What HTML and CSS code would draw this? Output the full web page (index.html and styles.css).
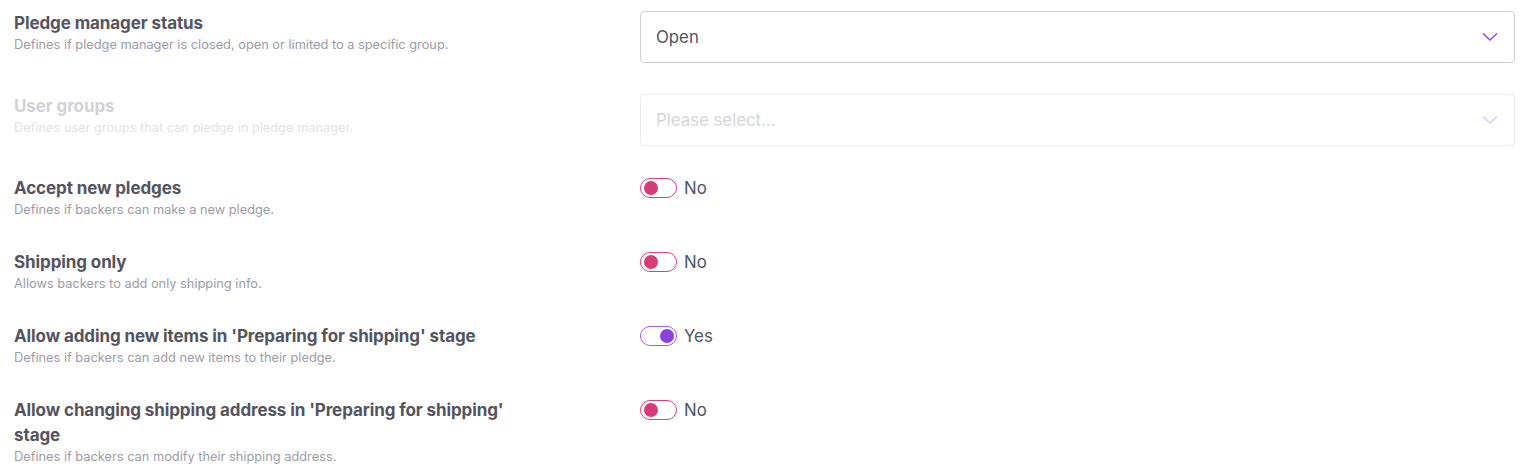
FILE: index.html
```html
<!DOCTYPE html>
<html lang="en">
<head>
<meta charset="utf-8">
<title>Pledge manager settings</title>
<link rel="stylesheet" href="styles.css">
</head>
<body>
<div class="settings">
  <div class="row">
    <div class="label">
      <div class="title">Pledge manager status</div>
      <div class="desc">Defines if pledge manager is closed, open or limited to a specific group.</div>
    </div>
    <div class="control">
      <div class="select">
        <span class="value">Open</span>
        <svg class="chev" width="16" height="10" viewBox="0 0 16 10"><path d="M1 1.5 L8 8 L15 1.5" fill="none" stroke="currentColor" stroke-width="1.5"/></svg>
      </div>
    </div>
  </div>
  <div class="row disabled">
    <div class="label">
      <div class="title">User groups</div>
      <div class="desc">Defines user groups that can pledge in pledge manager.</div>
    </div>
    <div class="control">
      <div class="select">
        <span class="value placeholder">Please select...</span>
        <svg class="chev" width="16" height="10" viewBox="0 0 16 10"><path d="M1 1.5 L8 8 L15 1.5" fill="none" stroke="currentColor" stroke-width="1.5"/></svg>
      </div>
    </div>
  </div>
  <div class="row">
    <div class="label">
      <div class="title">Accept new pledges</div>
      <div class="desc">Defines if backers can make a new pledge.</div>
    </div>
    <div class="control">
      <div class="switch"><span class="toggle off"><span class="knob"></span></span><span class="state">No</span></div>
    </div>
  </div>
  <div class="row">
    <div class="label">
      <div class="title">Shipping only</div>
      <div class="desc">Allows backers to add only shipping info.</div>
    </div>
    <div class="control">
      <div class="switch"><span class="toggle off"><span class="knob"></span></span><span class="state">No</span></div>
    </div>
  </div>
  <div class="row">
    <div class="label">
      <div class="title">Allow adding new items in 'Preparing for shipping' stage</div>
      <div class="desc">Defines if backers can add new items to their pledge.</div>
    </div>
    <div class="control">
      <div class="switch"><span class="toggle on"><span class="knob"></span></span><span class="state">Yes</span></div>
    </div>
  </div>
  <div class="row">
    <div class="label">
      <div class="title">Allow changing shipping address in 'Preparing for shipping' stage</div>
      <div class="desc">Defines if backers can modify their shipping address.</div>
    </div>
    <div class="control">
      <div class="switch"><span class="toggle off"><span class="knob"></span></span><span class="state">No</span></div>
    </div>
  </div>
</div>
</body>
</html>
```

FILE: styles.css
```css
html, body {
  margin: 0;
  padding: 0;
  background: #ffffff;
}
body {
  font-family: Inter, "Noto Sans", "Liberation Sans", sans-serif;
  color: #52525e;
}
.settings {
  padding: 11px 12px 0 14px;
  display: flex;
  flex-direction: column;
  gap: 31px;
}
.row {
  display: grid;
  grid-template-columns: 626px 1fr;
  align-items: start;
}
.row.disabled {
  margin-bottom: -1px;
}
.label {
  max-width: 520px;
}
.title {
  font-size: 17px;
  font-weight: 700;
  line-height: 25px;
  color: #54545f;
  letter-spacing: -0.1px;
}
.desc {
  font-size: 12.8px;
  line-height: 18px;
  color: #9b9ca8;
}
.disabled .title {
  color: #d2d2d7;
}
.disabled .desc {
  color: #e2e2e6;
}
.select {
  height: 52px;
  box-sizing: border-box;
  border: 1px solid #cfcfd4;
  border-radius: 4px;
  display: flex;
  align-items: center;
  justify-content: space-between;
  padding: 0 16px 0 15px;
}
.value {
  font-size: 16.8px;
  color: #4c5566;
}
.value.placeholder {
  color: #d6d6db;
}
.chev {
  color: #8b48e2;
}
.disabled .select {
  border-color: #ececf0;
}
.disabled .chev {
  color: #ddc8f6;
}
.switch {
  display: flex;
  align-items: center;
  gap: 7px;
  height: 24px;
}
.toggle {
  width: 37px;
  height: 20px;
  box-sizing: border-box;
  border-radius: 10px;
  border: 1.5px solid #dc3f7c;
  display: flex;
  align-items: center;
  padding: 0 2px 0 3px;
}
.knob {
  width: 14px;
  height: 14px;
  border-radius: 50%;
  background: #d93b79;
}
.toggle.on {
  border-color: #9c5fe6;
  justify-content: flex-end;
}
.toggle.on .knob {
  background: #8a41de;
}
.state {
  font-size: 16.8px;
  color: #4c5566;
  line-height: 24px;
}
```
